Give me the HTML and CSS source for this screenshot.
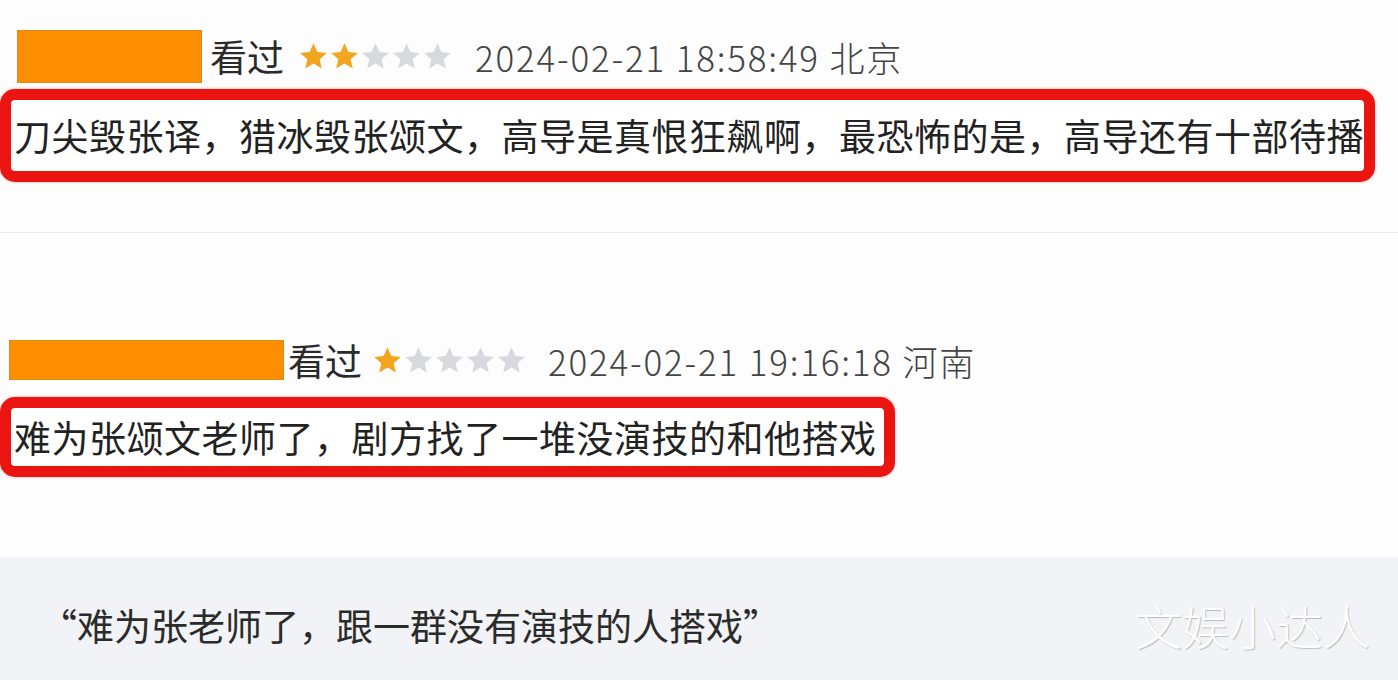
FILE: index.html
```html
<!DOCTYPE html>
<html lang="zh-CN">
<head>
  <meta charset="UTF-8">
  <title>评论</title>
  <link rel="stylesheet" href="styles.css">
</head>
<body>
  <svg style="display:none">
    <symbol id="star" viewBox="0 0 24 24"><path d="M12 1.8l3 6.7 7.3.7-5.5 4.9 1.6 7.2L12 17.5l-6.4 3.8 1.6-7.2-5.5-4.9 7.3-.7z"/></symbol>
  </svg>

  <div class="comment first">
    <div class="meta">
      <span class="name"></span>
      <span class="seen">看过</span>
      <span class="stars">
        <svg class="on"><use href="#star"/></svg><svg class="on"><use href="#star"/></svg><svg><use href="#star"/></svg><svg><use href="#star"/></svg><svg><use href="#star"/></svg>
      </span>
      <span class="date">2024-02-21 18:58:49 北京</span>
    </div>
    <div class="box">
      <p>刀尖毁张译，猎冰毁张颂文，高导是真恨狂飙啊，最恐怖的是，高导还有十部待播</p>
    </div>
  </div>

  <div class="comment second">
    <div class="meta">
      <span class="name"></span>
      <span class="seen">看过</span>
      <span class="stars">
        <svg class="on"><use href="#star"/></svg><svg><use href="#star"/></svg><svg><use href="#star"/></svg><svg><use href="#star"/></svg><svg><use href="#star"/></svg>
      </span>
      <span class="date">2024-02-21 19:16:18 河南</span>
    </div>
    <div class="box">
      <p>难为张颂文老师了，剧方找了一堆没演技的和他搭戏</p>
    </div>
  </div>

  <div class="quote">
    <p>“难为张老师了，跟一群没有演技的人搭戏”</p>
    <span class="mark">文娱小达人</span>
  </div>
</body>
</html>
```

FILE: styles.css
```css
* {
  margin: 0;
  padding: 0;
  box-sizing: border-box;
}
body {
  width: 1398px;
  height: 680px;
  overflow: hidden;
  background: #fdfdfe;
  font-family: "Noto Sans CJK SC", "Noto Sans", sans-serif;
  color: #222;
}

.comment {
  display: flex;
  flex-direction: column;
}
.meta {
  display: flex;
  align-items: center;
}
.name {
  background: #fd8e00;
  border: 1px solid #e08a20;
}
.seen {
  font-size: 37px;
  line-height: 1;
  color: #2a2a2a;
}
.stars {
  display: flex;
}
.stars svg {
  width: 31px;
  height: 31px;
  fill: #d6d9de;
}
.stars svg.on {
  fill: #f2a51e;
}
.date {
  font-size: 35px;
  font-weight: 300;
  line-height: 1;
  color: #444;
  letter-spacing: 1.8px;
}

.box {
  border: 11px solid #ea1510;
  border-radius: 15px;
  background: #fff;
  overflow: hidden;
  box-shadow: 0 0 3px rgba(234, 21, 16, 0.4);
}
.box p {
  font-size: 37px;
  letter-spacing: 0.5px;
  white-space: nowrap;
  color: #222;
  padding-left: 3px;
}

/* first comment */
.first {
  padding-top: 30px;
  height: 233px;
  border-bottom: 1px solid #e9ebef;
}
.first .meta {
  height: 53px;
  padding-left: 17px;
}
.first .name {
  width: 185px;
  height: 53px;
  margin-right: 8px;
}
.first .stars {
  margin-left: 14px;
  margin-right: 22px;
}
.first .box {
  margin-top: 6px;
  width: 1375px;
  height: 93px;
}
.first .box p {
  line-height: 71px;
}

/* second comment */
.second {
  padding-top: 107px;
  height: 323px;
}
.second .meta {
  height: 40px;
  padding-left: 9px;
}
.second .name {
  width: 275px;
  height: 40px;
  margin-right: 4px;
}
.second .stars {
  margin-left: 10px;
  margin-right: 21px;
}
.second .box {
  margin-top: 17px;
  width: 895px;
  height: 80px;
}
.second .box p {
  line-height: 58px;
}

/* caption strip */
.quote {
  height: 124px;
  background: #f2f3f6;
  border-top: 2px solid #f7f8fa;
  display: flex;
  align-items: center;
  justify-content: space-between;
  padding: 0 28px 0 40px;
}
.quote p {
  font-size: 37px;
  color: #2b2b2b;
  padding-top: 12px;
}
.mark {
  font-size: 47px;
  font-weight: 300;
  color: #fff;
  text-shadow: 1px 1px 1px #b9bcc2;
  padding-top: 10px;
}
```
